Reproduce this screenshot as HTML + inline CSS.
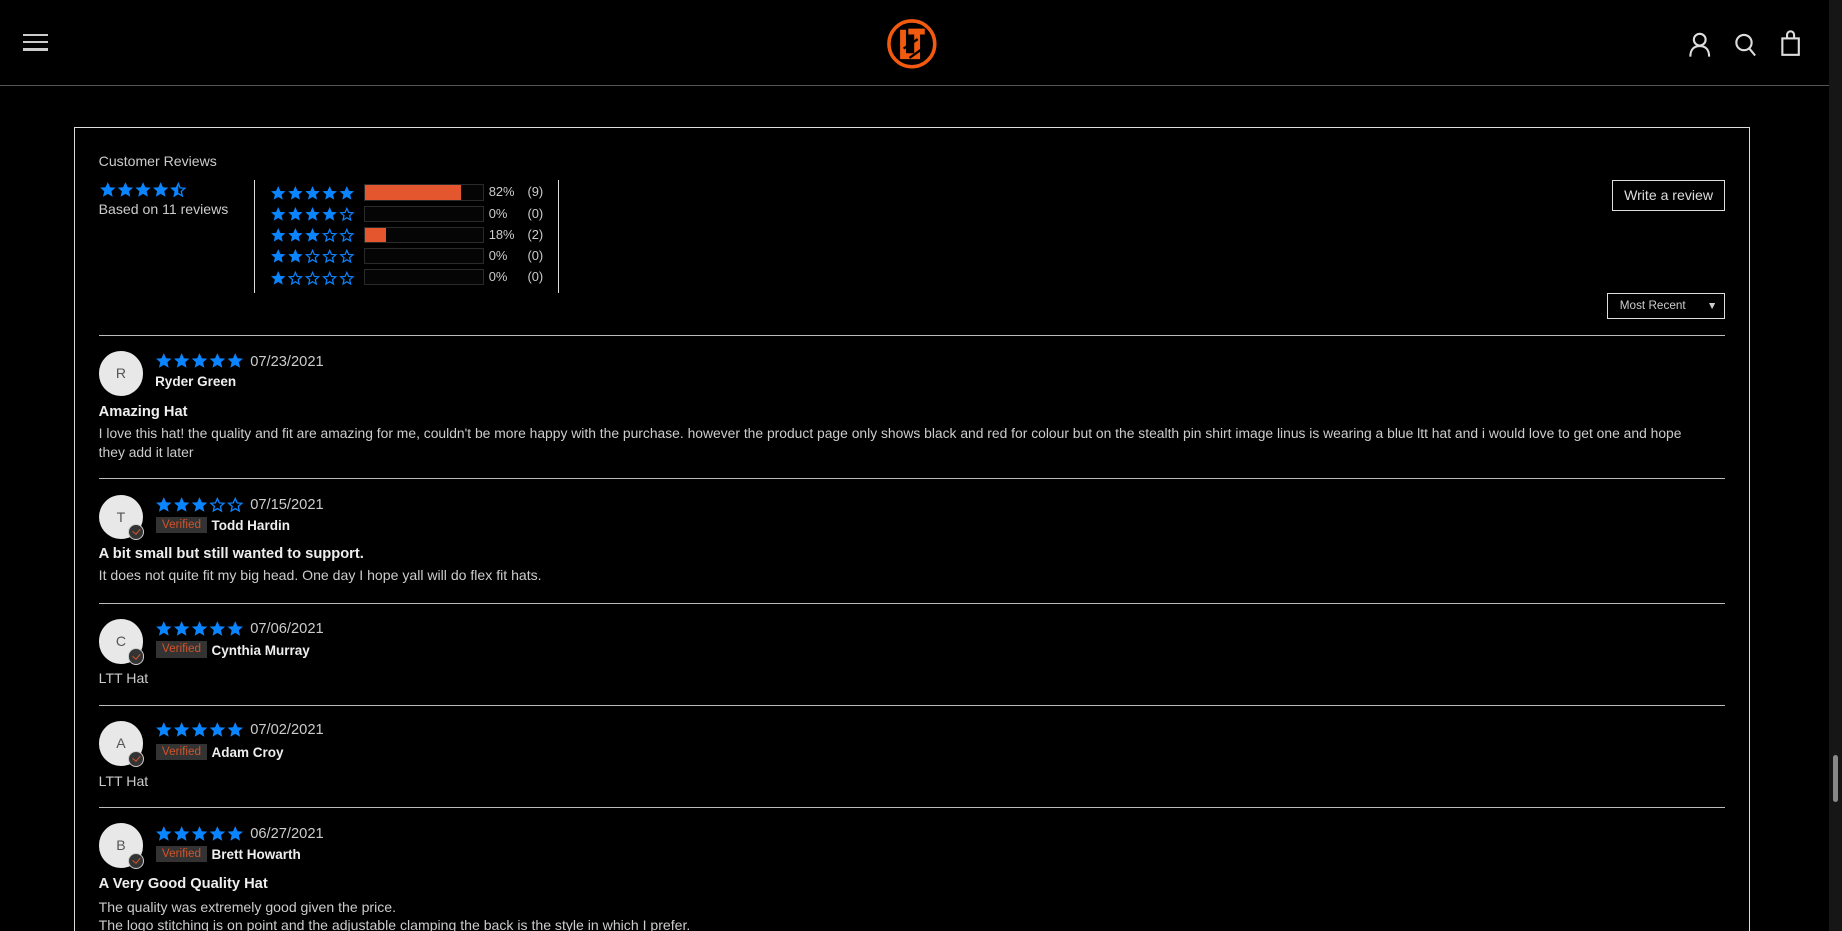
<!DOCTYPE html>
<html><head><meta charset="utf-8"><style>
html,body{margin:0;padding:0;background:#000;overflow:hidden}
body{width:1842px;height:931px}
#w{zoom:1.17474;position:relative;width:1568px;height:793px;font-family:"Liberation Sans",sans-serif;color:#ddd}
.a{position:absolute;white-space:nowrap}
.t{font-size:12px;color:#ccc}
svg.s{position:absolute}
.hr{position:absolute;left:84px;width:1384px;height:1px;background:#bbb}
.av{position:absolute;left:84px;width:38px;height:38px;border-radius:50%;background:#e8e8e8;color:#555;font-size:12px;text-align:center;line-height:38px}
.ck{position:absolute;left:109px;width:12px;height:12px;border-radius:50%;background:#333;border:1px solid #ccc}
.ck:after{content:"";position:absolute;left:4px;top:2px;width:3px;height:5px;border:solid #d0542a;border-width:0 1.5px 1.5px 0;transform:rotate(40deg)}
.vb{position:absolute;left:133px;width:43px;height:14px;background:#333;color:#d0542a;font-size:10px;text-align:center;line-height:14px}
.nm{font-size:11.5px;font-weight:bold;color:#eee}
.ti{font-size:12.5px;font-weight:bold;color:#eee}
.bar{position:absolute;left:310px;width:100px;height:12px;border:1px solid #2a2a2a;background:#050505}
.bar i{display:block;height:12px;background:#e4572e}
</style></head><body><div id="w">
<svg width="0" height="0" style="position:absolute"><defs>
<symbol id="f" viewBox="0 0 24 24"><path d="M12 1.5l3.1 7 7.4.6-5.6 4.9 1.7 7.4L12 17.5 5.4 21.4l1.7-7.4L1.5 9.1l7.4-.6z" fill="#0a84ff"/></symbol>
<symbol id="e" viewBox="0 0 24 24"><path d="M12 3.5l2.6 5.9 6.3.5-4.8 4.2 1.4 6.3L12 17.1l-5.5 3.3 1.4-6.3-4.8-4.2 6.3-.5z" fill="none" stroke="#0a84ff" stroke-width="1.8"/></symbol>
<symbol id="h" viewBox="0 0 24 24"><path d="M12 3.5l2.6 5.9 6.3.5-4.8 4.2 1.4 6.3L12 17.1l-5.5 3.3 1.4-6.3-4.8-4.2 6.3-.5z" fill="none" stroke="#0a84ff" stroke-width="1.8"/><path d="M12 1.5v16L5.4 21.4l1.7-7.4L1.5 9.1l7.4-.6z" fill="#0a84ff"/></symbol>
</defs></svg>

<div class="a" style="left:0;top:72px;width:1557px;height:1px;background:#555"></div>
<div class="a" style="left:20px;top:29px;width:21px;height:2px;background:#ccc"></div>
<div class="a" style="left:20px;top:35px;width:21px;height:2px;background:#ccc"></div>
<div class="a" style="left:20px;top:41px;width:21px;height:2px;background:#ccc"></div>
<svg class="s" style="left:754px;top:15px" width="44" height="44" viewBox="0 0 44 44"><circle cx="22" cy="22" r="19.5" fill="none" stroke="#f25a0f" stroke-width="3"/><path d="M12 10h5v20h8v5H12z M19 9h14v5h-4v21h-5V14h-5z" fill="#f25a0f"/><path d="M15 26l12-8M20 34l14-10" stroke="#000" stroke-width="2"/></svg>
<svg class="s" style="left:1437px;top:27px" width="20" height="22" viewBox="0 0 20 22"><circle cx="10" cy="6.5" r="5" fill="none" stroke="#ddd" stroke-width="1.8"/><path d="M2 21c0-6 3-9 8-9s8 3 8 9" fill="none" stroke="#ddd" stroke-width="1.8"/></svg>
<svg class="s" style="left:1476px;top:27px" width="20" height="22" viewBox="0 0 20 22"><circle cx="8.5" cy="9" r="6.5" fill="none" stroke="#ddd" stroke-width="1.8"/><path d="M13 14l5 6" stroke="#ddd" stroke-width="1.8"/></svg>
<svg class="s" style="left:1515px;top:25px" width="18" height="24" viewBox="0 0 18 24"><rect x="2" y="8" width="14" height="14" fill="none" stroke="#ddd" stroke-width="1.8"/><path d="M6 8V5a3 3 0 0 1 6 0v3" fill="none" stroke="#ddd" stroke-width="1.8"/></svg>
<div class="a" style="left:1557px;top:0;width:11px;height:793px;background:#161616"></div>
<div class="a" style="left:1560px;top:643px;width:5px;height:40px;background:#888;border-radius:3px"></div>

<div class="a" style="left:63px;top:108px;width:1425px;height:700px;border:1px solid #ddd"></div>
<div class="a t" style="left:84px;top:130px">Customer Reviews</div>
<svg class="s" style="left:84px;top:154px" width="76" height="15"><use href="#f" x="0" width="15" height="15"/><use href="#f" x="15" width="15" height="15"/><use href="#f" x="30" width="15" height="15"/><use href="#f" x="45" width="15" height="15"/><use href="#h" x="60" width="15" height="15"/></svg>
<div class="a t" style="left:84px;top:171px;font-size:12px">Based on 11 reviews</div>
<div class="a" style="left:216px;top:153px;width:1px;height:96px;background:#ddd"></div>
<div class="a" style="left:475px;top:153px;width:1px;height:96px;background:#ddd"></div>

<div id="hist"></div>

<div class="a" style="left:1372px;top:153px;width:95px;height:25px;border:1px solid #ddd;color:#ddd;font-size:12px;text-align:center;line-height:25px">Write a review</div>
<div class="a" style="left:1368px;top:249px;width:99px;height:21px;border:1px solid #ddd;color:#ccc;font-size:10px;line-height:21px"><span style="margin-left:10px">Most Recent</span><span style="position:absolute;right:6px;font-size:9px">▼</span></div>

<div class="hr" style="top:285px"></div>
<div class="hr" style="top:407px"></div>
<div class="hr" style="top:513px"></div>
<div class="hr" style="top:600px"></div>
<div class="hr" style="top:687px"></div>

<div class="av" style="top:299px">R</div>
<div class="a t" style="left:213px;top:301px;font-size:12.5px">07/23/2021</div>
<div class="a nm" style="left:132px;top:318px">Ryder Green</div>
<div class="a ti" style="left:84px;top:344px">Amazing Hat</div>
<div class="a t" style="left:84px;top:361px;line-height:16px;font-size:11.8px">I love this hat! the quality and fit are amazing for me, couldn't be more happy with the purchase. however the product page only shows black and red for colour but on the stealth pin shirt image linus is wearing a blue ltt hat and i would love to get one and hope<br>they add it later</div>

<div class="av" style="top:421px">T</div><div class="ck" style="top:446px"></div>
<div class="a t" style="left:213px;top:423px;font-size:12.5px">07/15/2021</div>
<div class="vb" style="top:440px">Verified</div>
<div class="a nm" style="left:180px;top:441px">Todd Hardin</div>
<div class="a ti" style="left:84px;top:465px">A bit small but still wanted to support.</div>
<div class="a t" style="left:84px;top:483px">It does not quite fit my big head. One day I hope yall will do flex fit hats.</div>

<div class="av" style="top:527px">C</div><div class="ck" style="top:552px"></div>
<div class="a t" style="left:213px;top:529px;font-size:12.5px">07/06/2021</div>
<div class="vb" style="top:546px">Verified</div>
<div class="a nm" style="left:180px;top:547px">Cynthia Murray</div>
<div class="a t" style="left:84px;top:570px">LTT Hat</div>

<div class="av" style="top:614px">A</div><div class="ck" style="top:639px"></div>
<div class="a t" style="left:213px;top:615px;font-size:12.5px">07/02/2021</div>
<div class="vb" style="top:633px">Verified</div>
<div class="a nm" style="left:180px;top:634px">Adam Croy</div>
<div class="a t" style="left:84px;top:658px">LTT Hat</div>

<div class="av" style="top:701px">B</div><div class="ck" style="top:726px"></div>
<div class="a t" style="left:213px;top:703px;font-size:12.5px">06/27/2021</div>
<div class="vb" style="top:720px">Verified</div>
<div class="a nm" style="left:180px;top:721px">Brett Howarth</div>
<div class="a ti" style="left:84px;top:746px">A Very Good Quality Hat</div>
<div class="a t" style="left:84px;top:764px;line-height:16px">The quality was extremely good given the price.<br>The logo stitching is on point and the adjustable clamping the back is the style in which I prefer.</div>

<script>
function stars(n,size,gap){let s='<svg width="'+(5*gap)+'" height="'+size+'">';for(let i=0;i<5;i++)s+='<use href="#'+(i<n?'f':'e')+'" x="'+(i*gap)+'" width="'+size+'" height="'+size+'"/>';return s+'</svg>';}
const rows=[[5,82,'82%','(9)'],[4,0,'0%','(0)'],[3,18,'18%','(2)'],[2,0,'0%','(0)'],[1,0,'0%','(0)']];
let h='';rows.forEach((r,i)=>{const y=157+i*18;
h+='<div class="a" style="left:230px;top:'+(y)+'px">'+stars(r[0],14,14.6)+'</div>';
h+='<div class="bar" style="top:'+y+'px"><i style="width:'+r[1]+'%"></i></div>';
h+='<div class="a t" style="left:416px;top:'+(y)+'px;font-size:11px">'+r[2]+'</div>';
h+='<div class="a t" style="left:449px;top:'+(y)+'px;font-size:11px">'+r[3]+'</div>';});
document.getElementById('hist').innerHTML=h;
const rv=[[5,300],[3,422],[5,528],[5,614],[5,702]];
rv.forEach((r,i)=>{const d=document.createElement('div');d.className='a';d.style.left='132px';d.style.top=r[1]+'px';d.innerHTML=stars(r[0],15,15.2);document.getElementById('w').appendChild(d);});
</script>
</div></body></html>
